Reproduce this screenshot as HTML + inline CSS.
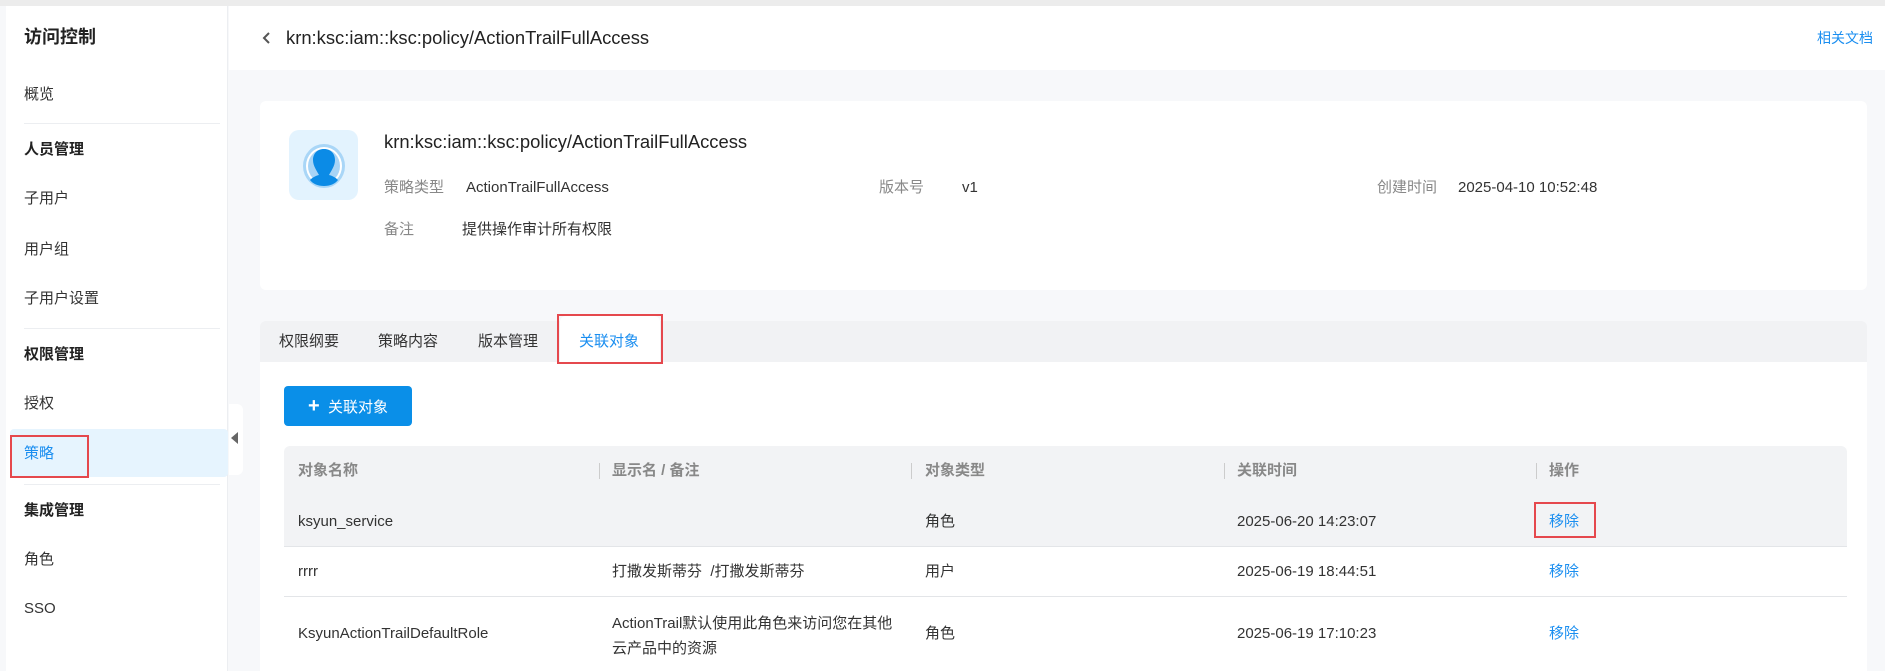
<!DOCTYPE html>
<html><head><meta charset="utf-8"><style>
*{margin:0;padding:0;box-sizing:border-box}
body{width:1885px;height:671px;overflow:hidden;background:#f7f8fa;font-family:"Liberation Sans","Noto Sans CJK SC",sans-serif;color:#333;font-size:15px;position:relative}
.a{position:absolute;white-space:nowrap;line-height:22px}
.side{position:absolute;left:6px;top:6px;width:222px;height:665px;background:#fff;border-right:1px solid #eceef1}
.hd{position:absolute;left:229px;top:6px;right:0;height:64px;background:#fff}
.g{color:#888}
.b{color:#1a8ef0}
.div{position:absolute;left:18px;width:196px;height:1px;background:#eceef1}
.red{position:absolute;border:2px solid #e5484d}
.th{color:#888;font-weight:bold}
.sep{position:absolute;width:1px;height:16px;background:#ccc}
.rowline{position:absolute;left:284px;width:1563px;height:1px;background:#e3e5e8}
</style></head><body>
<div class="a" style="left:0;top:0;width:1885px;height:6px;background:#ececec"></div>
<div class="side">
<div class="a" style="left:18px;top:20px;font-size:18px;font-weight:bold;color:#222">访问控制</div>
<div class="a" style="left:18px;top:78px">概览</div>
<div class="div" style="top:117px"></div>
<div class="a" style="left:18px;top:133px;font-weight:bold;color:#222">人员管理</div>
<div class="a" style="left:18px;top:182px">子用户</div>
<div class="a" style="left:18px;top:233px">用户组</div>
<div class="a" style="left:18px;top:282px">子用户设置</div>
<div class="div" style="top:322px"></div>
<div class="a" style="left:18px;top:338px;font-weight:bold;color:#222">权限管理</div>
<div class="a" style="left:18px;top:387px">授权</div>
<div class="a" style="left:4px;top:423px;width:218px;height:48px;background:#e6f4fe;border-radius:4px"></div>
<div class="a b" style="left:18px;top:437px">策略</div>
<div class="div" style="top:478px"></div>
<div class="a" style="left:18px;top:494px;font-weight:bold;color:#222">集成管理</div>
<div class="a" style="left:18px;top:543px">角色</div>
<div class="a" style="left:18px;top:592px">SSO</div>
</div>
<div class="red" style="left:10px;top:435px;width:79px;height:43px"></div>
<div class="a" style="left:229px;top:404px;width:14px;height:71px;background:#fff;border-radius:0 6px 6px 0"></div>
<div class="a" style="left:231px;top:432px;width:0;height:0;border-top:6px solid transparent;border-bottom:6px solid transparent;border-right:7px solid #666"></div>
<div class="hd"></div>
<svg class="a" style="left:262px;top:31px" width="10" height="14"><path d="M7 2 L2 7 L7 12" stroke="#555" stroke-width="2" fill="none"/></svg>
<div class="a" style="left:286px;top:27px;font-size:18.4px;color:#222">krn:ksc:iam::ksc:policy/ActionTrailFullAccess</div>
<div class="a b" style="left:1817px;top:27px;font-size:14px">相关文档</div>
<div class="a" style="left:260px;top:101px;width:1607px;height:189px;background:#fff;border-radius:6px"></div>
<div class="a" style="left:289px;top:130px;width:69px;height:70px;background:#e3f3fe;border-radius:10px"></div>
<svg class="a" style="left:300px;top:142px" width="48" height="48" viewBox="0 0 48 48"><ellipse cx="24" cy="24" rx="21" ry="22" fill="#a9d6f7"/><ellipse cx="24" cy="24" rx="18" ry="19" fill="#fff"/><ellipse cx="24" cy="24" rx="16" ry="17" fill="#a7d4f6"/><path d="M24 7c7 0 11 5 11 11 0 6-4 11-6 15 4 1 7 3 9 5-3 4-8 6-14 6s-11-2-14-6c2-2 5-4 9-5-2-4-6-9-6-15 0-6 4-11 11-11z" fill="#0b8be6"/></svg>
<div class="a" style="left:384px;top:131px;font-size:18.4px;color:#222">krn:ksc:iam::ksc:policy/ActionTrailFullAccess</div>
<div class="a g" style="left:384px;top:177px">策略类型</div>
<div class="a" style="left:466px;top:177px">ActionTrailFullAccess</div>
<div class="a g" style="left:879px;top:177px">版本号</div>
<div class="a" style="left:962px;top:177px">v1</div>
<div class="a g" style="left:1377px;top:177px">创建时间</div>
<div class="a" style="left:1458px;top:177px">2025-04-10 10:52:48</div>
<div class="a g" style="left:384px;top:219px">备注</div>
<div class="a" style="left:462px;top:219px">提供操作审计所有权限</div>
<div class="a" style="left:260px;top:321px;width:1607px;height:42px;background:#f1f2f4;border-radius:6px 6px 0 0"></div>
<div class="a" style="left:260px;top:362px;width:1607px;height:309px;background:#fff"></div>
<div class="a" style="left:560px;top:316px;width:100px;height:47px;background:#fff;border-radius:6px 6px 0 0"></div>
<div class="a" style="left:279px;top:331px">权限纲要</div>
<div class="a" style="left:378px;top:331px">策略内容</div>
<div class="a" style="left:478px;top:331px">版本管理</div>
<div class="a b" style="left:579px;top:331px">关联对象</div>
<div class="red" style="left:557px;top:314px;width:106px;height:50px"></div>
<div class="a" style="left:284px;top:386px;width:128px;height:40px;background:#0a8fe8;border-radius:4px;color:#fff;padding:9px 0 0 24px"><span style="font-size:20px;font-weight:bold">+</span>&nbsp; 关联对象</div>
<div class="a" style="left:284px;top:446px;width:1563px;height:100px;background:#f2f3f5;border-radius:6px 6px 0 0"></div>
<div class="a th" style="left:298px;top:460px">对象名称</div>
<div class="sep" style="left:599px;top:463px"></div><div class="a th" style="left:612px;top:460px">显示名 / 备注</div>
<div class="sep" style="left:911px;top:463px"></div><div class="a th" style="left:925px;top:460px">对象类型</div>
<div class="sep" style="left:1224px;top:463px"></div><div class="a th" style="left:1237px;top:460px">关联时间</div>
<div class="sep" style="left:1536px;top:463px"></div><div class="a th" style="left:1549px;top:460px">操作</div>
<div class="a" style="left:298px;top:511px">ksyun_service</div>
<div class="a" style="left:925px;top:511px">角色</div>
<div class="a" style="left:1237px;top:511px">2025-06-20 14:23:07</div>
<div class="a b" style="left:1549px;top:511px">移除</div>
<div class="red" style="left:1534px;top:502px;width:62px;height:36px"></div>
<div class="rowline" style="top:546px"></div>
<div class="a" style="left:298px;top:561px">rrrr</div>
<div class="a" style="left:612px;top:561px">打撒发斯蒂芬 &nbsp;/打撒发斯蒂芬</div>
<div class="a" style="left:925px;top:561px">用户</div>
<div class="a" style="left:1237px;top:561px">2025-06-19 18:44:51</div>
<div class="a b" style="left:1549px;top:561px">移除</div>
<div class="rowline" style="top:596px"></div>
<div class="a" style="left:298px;top:623px">KsyunActionTrailDefaultRole</div>
<div class="a" style="left:612px;top:611px;line-height:25px">ActionTrail默认使用此角色来访问您在其他<br>云产品中的资源</div>
<div class="a" style="left:925px;top:623px">角色</div>
<div class="a" style="left:1237px;top:623px">2025-06-19 17:10:23</div>
<div class="a b" style="left:1549px;top:623px">移除</div>
</body></html>
